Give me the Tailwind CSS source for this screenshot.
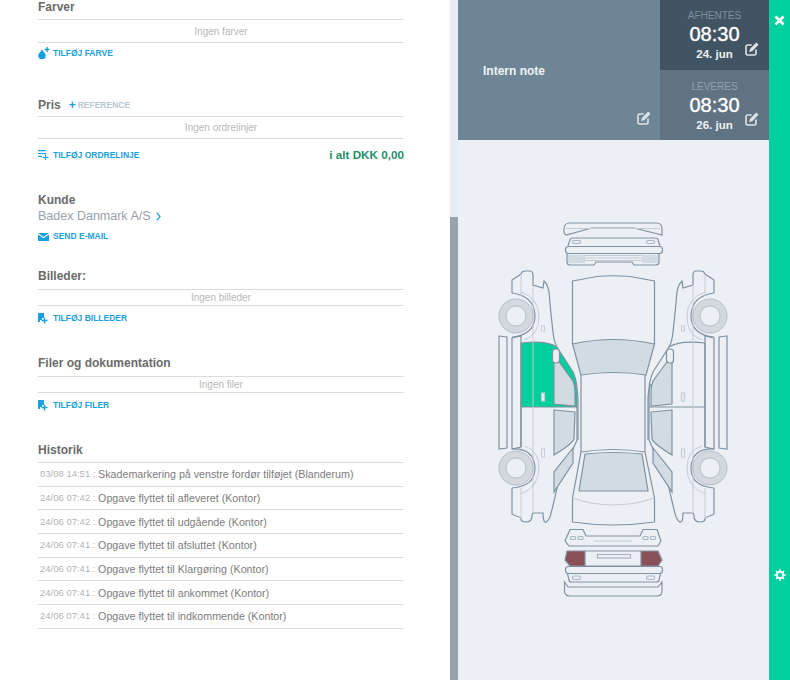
<!DOCTYPE html>
<html lang="da">
<head>
  <meta charset="UTF-8" />
  <title>Opgave</title>
  <script src="https://cdn.jsdelivr.net/npm/@tailwindcss/browser@4"></script>
</head>
<body class="bg-white font-['Liberation_Sans',Arial,sans-serif] overflow-hidden">

  <!-- Ikoner -->
  <svg class="hidden">
    <symbol id="edit" viewBox="0 0 14 14">
      <path d="M11 7.500v3.800a1.700 1.700 0 0 1-1.700 1.700H2.700A1.700 1.700 0 0 1 1 11.300V4.700A1.700 1.700 0 0 1 2.700 3h4" fill="none" stroke="currentColor" stroke-width="1.600"/>
      <path d="M4.200 10l.8-3L11.200.500l2.300 2.200L7.200 9.200z" fill="currentColor"/>
    </symbol>
    <symbol id="fileplus" viewBox="0 0 10 11">
      <path d="M0 0h6v5H4v2H2v2H0z" fill="currentColor"/>
      <path d="M3.500 7.500h6M6.500 4.800v5.800" stroke="currentColor" stroke-width="1.500"/>
    </symbol>
    <!-- Bilens side, tegnet til venstre og spejlet til hoejre -->
    <symbol id="carside" viewBox="490 215 250 395" overflow="visible">
      <g fill="none" stroke="#8091a0" stroke-width="1.200">
        <path d="M512 293V280L521 274Q522 271 525 271H531Q533 272 533 275V285L543 288L544 281Q548 285 549 292Q551 315 553 332Q554 342 557 347L573 372Q577 381 577 390V440L562 473Q558 482 555 497Q552 510 550 517Q547 523 545 522Q543 521 543 513H534Q532 513 532 516Q532 522 526 522Q521 522 521 519Q521 517 516 516L512 514V488"/>
        <path d="M512 293Q534 296 535 315Q535 335 512 337"/>
        <path d="M512 449Q534 448 535 468Q535 486 512 488"/>
        <path d="M499 336L507 337V448L499 449Z"/>
        <path d="M512 338L521 336V447L512 449Z"/>
        <path d="M521 343V447"/>
        <path d="M521 343Q546 340 557 347M521 407H577"/>
        <path d="M575 384Q578 390 578 400V440"/>
        <path d="M554 355L573 381Q575 386 575 392V406L554 404Z" fill="#d3dbe2"/>
        <path d="M554 410L575 412L574 439Q572 444 554 455Z" fill="#d3dbe2"/>
        <path d="M573 448L554 472V492L573 463Z" fill="#d3dbe2"/>
        <rect x="552.500" y="349" width="7" height="14" rx="3" fill="#ecf0f5"/>
      </g>
      <g fill="none" stroke="#c3ccd4" stroke-width="1">
        <path d="M533 285V513M521 274V296M521 488V518"/>
        <path d="M521 292Q539 298 539 317Q539 335 524 340"/>
        <path d="M524 446Q539 450 539 468Q539 487 521 494"/>
        <rect x="541.500" y="326" width="3" height="5"/>
        <rect x="541.500" y="449" width="3" height="8"/>
      </g>
      <g stroke="#b4bec7" stroke-width="1" fill="#d3d8de">
        <path fill-rule="evenodd" d="M516 299a17 17 0 1 0 .01 0zM516 306a10 10 0 1 1-.01 0z"/>
        <path fill-rule="evenodd" d="M516 451a17 17 0 1 0 .01 0zM516 458a10 10 0 1 1-.01 0z"/>
      </g>
    </symbol>
  </svg>

  <div class="flex w-[790px] h-[680px] overflow-hidden">

    <!-- Venstre kolonne -->
    <div class="w-[450px] h-full shrink-0 pl-[38px] pr-[46px] text-[#6b6b6b]">

      <h2 class="h-[19px] text-[12px] leading-[15px] font-bold">Farver</h2>
      <div class="h-[24px] border-y border-[#dcdcdc] flex items-center justify-center text-[10px] text-[#b8b8b8]">Ingen farver</div>
      <div class="h-[21px] flex items-center gap-[3px] text-[8.500px] font-bold text-[#1a9fe0]">
        <svg class="w-[12px] h-[12px] -mt-[1px]" viewBox="0 0 12 12"><path d="M4 2.500C5.500 5 7.800 6.500 7.800 8.500a3.800 3.800 0 0 1-7.600 0C.2 6.500 2.500 5 4 2.500z" fill="currentColor"/><path d="M6.500 2.500h5M9 0v5" stroke="currentColor" stroke-width="1.400"/></svg>
        <span>TILFØJ FARVE</span>
      </div>

      <div class="mt-[34px] h-[18px] flex text-[12px] leading-[15px]">
        <h2 class="font-bold">Pris</h2>
        <span class="ml-[8px] flex items-center h-[14px] text-[8.500px] font-bold text-[#b4c7d3]"><span class="text-[#1a9fe0] text-[12px] mr-[2px]">+</span>REFERENCE</span>
      </div>
      <div class="h-[23px] border-y border-[#dcdcdc] flex items-center justify-center text-[10px] text-[#b8b8b8]">Ingen ordrelinjer</div>
      <div class="h-[32px] flex items-center justify-between">
        <div class="flex items-center gap-[4px] text-[8.500px] font-bold text-[#1a9fe0]">
          <svg class="w-[11px] h-[10px]" viewBox="0 0 11 10"><path d="M0 .7h8M0 3.500h8M0 6.300h4M4.500 7.500h6M7.500 4.500v5.500" fill="none" stroke="currentColor" stroke-width="1.200"/></svg>
          <span>TILFØJ ORDRELINJE</span>
        </div>
        <span class="text-[11.700px] font-bold text-[#1f8f6b]">i alt DKK 0,00</span>
      </div>

      <h2 class="mt-[21px] h-[14px] text-[12px] leading-[16px] font-bold">Kunde</h2>
      <div class="h-[20px] flex items-center gap-[5px] text-[12.500px] text-[#98a0a8]">
        <span>Badex Danmark A/S</span>
        <svg class="w-[5px] h-[9px]" viewBox="0 0 5 9"><path d="M.7.700L4 4.500.7 8.300" fill="none" stroke="#1a9fe0" stroke-width="1.200"/></svg>
      </div>
      <div class="h-[21px] flex items-center gap-[4px] text-[8.500px] font-bold text-[#1a9fe0]">
        <svg class="w-[11px] h-[8px]" viewBox="0 0 11 8"><path d="M0 0h11L5.500 4z" fill="currentColor"/><path d="M0 1.500L5.500 5.300 11 1.500V8H0z" fill="currentColor"/></svg>
        <span>SEND E-MAIL</span>
      </div>

      <h2 class="mt-[22px] h-[20px] text-[12px] leading-[15px] font-bold">Billeder:</h2>
      <div class="h-[17px] border-y border-[#dcdcdc] flex items-center justify-center text-[10px] text-[#b8b8b8]">Ingen billeder</div>
      <div class="h-[24px] flex items-center gap-[5px] text-[8.500px] font-bold text-[#1a9fe0]">
        <svg class="w-[10px] h-[11px] text-[#1a9fe0]"><use href="#fileplus"/></svg>
        <span>TILFØJ BILLEDER</span>
      </div>

      <h2 class="mt-[26px] h-[20px] text-[12px] leading-[15px] font-bold">Filer og dokumentation</h2>
      <div class="h-[17px] border-y border-[#dcdcdc] flex items-center justify-center text-[10px] text-[#b8b8b8]">Ingen filer</div>
      <div class="h-[24px] flex items-center gap-[5px] text-[8.500px] font-bold text-[#1a9fe0]">
        <svg class="w-[10px] h-[11px] text-[#1a9fe0]"><use href="#fileplus"/></svg>
        <span>TILFØJ FILER</span>
      </div>

      <h2 class="mt-[25px] h-[20px] text-[12px] leading-[16px] font-bold">Historik</h2>
      <ul class="border-t border-[#dcdcdc] text-[10.700px] text-[#7c7c7c]">
        <li class="h-[23.700px] border-b border-[#dcdcdc] flex items-center pl-[2px] whitespace-pre"><span class="text-[9.500px] text-[#b4b4b4]">03/08 14:51 : </span>Skademarkering på venstre fordør tilføjet (Blanderum)</li>
        <li class="h-[23.700px] border-b border-[#dcdcdc] flex items-center pl-[2px] whitespace-pre"><span class="text-[9.500px] text-[#b4b4b4]">24/06 07:42 : </span>Opgave flyttet til afleveret (Kontor)</li>
        <li class="h-[23.700px] border-b border-[#dcdcdc] flex items-center pl-[2px] whitespace-pre"><span class="text-[9.500px] text-[#b4b4b4]">24/06 07:42 : </span>Opgave flyttet til udgående (Kontor)</li>
        <li class="h-[23.700px] border-b border-[#dcdcdc] flex items-center pl-[2px] whitespace-pre"><span class="text-[9.500px] text-[#b4b4b4]">24/06 07:41 : </span>Opgave flyttet til afsluttet (Kontor)</li>
        <li class="h-[23.700px] border-b border-[#dcdcdc] flex items-center pl-[2px] whitespace-pre"><span class="text-[9.500px] text-[#b4b4b4]">24/06 07:41 : </span>Opgave flyttet til Klargøring (Kontor)</li>
        <li class="h-[23.700px] border-b border-[#dcdcdc] flex items-center pl-[2px] whitespace-pre"><span class="text-[9.500px] text-[#b4b4b4]">24/06 07:41 : </span>Opgave flyttet til ankommet (Kontor)</li>
        <li class="h-[23.700px] border-b border-[#dcdcdc] flex items-center pl-[2px] whitespace-pre"><span class="text-[9.500px] text-[#b4b4b4]">24/06 07:41 : </span>Opgave flyttet til indkommende (Kontor)</li>
      </ul>
    </div>

    <!-- Scrollbar -->
    <div class="w-[8px] h-full shrink-0 bg-[#98a2ae]">
      <div class="h-[217px] bg-[#e8edf4]"></div>
    </div>

    <!-- Hoejre panel -->
    <div class="w-[311px] h-full shrink-0 bg-[#ecf0f5] flex flex-col">
      <div class="h-[140px] flex shrink-0">
        <div class="relative flex-1 bg-[#6e8595] flex items-center pl-[25px] pt-[2px] text-[12px] font-bold text-[#f0f3f5]">
          Intern note
          <svg class="absolute right-[9px] bottom-[15px] w-[14px] h-[14px] text-[#dfe4e8]"><use href="#edit"/></svg>
        </div>
        <div class="w-[109px] flex flex-col text-center text-white">
          <div class="relative h-[70px] bg-[#415463] pt-[9px]">
            <div class="text-[10px] leading-[13px] text-[#7f909e]">AFHENTES</div>
            <div class="text-[20px] leading-[24px] [-webkit-text-stroke:0.4px_white]">08:30</div>
            <div class="text-[11.500px] leading-[16px] font-bold text-[#eef1f3]">24. jun</div>
            <svg class="absolute right-[10px] bottom-[14px] w-[14px] h-[14px] text-[#dfe4e8]"><use href="#edit"/></svg>
          </div>
          <div class="relative h-[70px] bg-[#5f7382] pt-[10px]">
            <div class="text-[10px] leading-[13px] text-[#93a2ae]">LEVERES</div>
            <div class="text-[20px] leading-[24px] [-webkit-text-stroke:0.4px_white]">08:30</div>
            <div class="text-[11.500px] leading-[16px] font-bold text-[#eef1f3]">26. jun</div>
            <svg class="absolute right-[10px] bottom-[14px] w-[14px] h-[14px] text-[#dfe4e8]"><use href="#edit"/></svg>
          </div>
        </div>
      </div>

      <!-- Skadediagram -->
      <div class="pt-[75px] pl-[32px]">
        <svg class="block w-[250px] h-[395px]" viewBox="490 215 250 395" fill="none" stroke="#8091a0" stroke-width="1.200">
          <!-- Skadet doer og baglygter -->
          <path d="M521 343Q546 340 557 347L573 372Q577 381 577 390V407H521Z" fill="#00cf9e" stroke="none"/>
          <path d="M567 551H585V566H570L565 560Z" fill="#8a5057"/>
          <path d="M641 551H658L662 560L658 566H641Z" fill="#8a5057"/>

          <use href="#carside" x="490" y="215" width="250" height="395"/>
          <g transform="matrix(-1 0 0 1 1226 0)"><use href="#carside" x="490" y="215" width="250" height="395"/></g>
          <rect x="541.500" y="393" width="3" height="8" fill="#ecf0f5" stroke="#c3ccd4"/>
          <rect x="681.500" y="393" width="3" height="8" stroke="#c3ccd4"/>

          <!-- Forfra -->
          <path d="M564 229Q564 223 570 223H657Q662 223 662 229V235L634 228H592L566 235Q564 234 564 232Z"/>
          <path d="M566 228.500H660" stroke="#c3ccd4"/>
          <path d="M568 246L570 240Q570 238 573 238H655Q658 238 658 240L660 246"/>
          <rect x="565.500" y="246.500" width="97" height="7" rx="3"/>
          <path d="M567 253.500V262Q567 265 570 265H594L596 262H632L634 265H656Q659 265 659 262V253.500"/>
          <path d="M568 255H585V263H568ZM642 255H658V263H642Z" fill="#d3dbe2" stroke="none"/>
          <path d="M585 255.500H642M585 258H642M585 260.500H642" stroke="#c3ccd4"/>
          <rect x="572.500" y="240.500" width="8" height="3" rx="1.500" stroke="#a9b5bf"/>
          <rect x="646.500" y="240.500" width="8" height="3" rx="1.500" stroke="#a9b5bf"/>

          <!-- Midterdel -->
          <path d="M572.500 281L597 276.500Q613 275 630 276.500L654.500 281V344H572.500Z"/>
          <path d="M572.500 344Q613 335 654.500 344L646 375Q613 370 581 375Z" fill="#d3dbe2"/>
          <path d="M581 375V452M645 375V452"/>
          <path d="M581 452Q613 447 645 452"/>
          <path d="M585 454Q613 451 642 454L648 491H579Z" fill="#d3dbe2"/>
          <path d="M581 452L572.500 498V522Q613 528 654.500 522V498L645 452"/>
          <path d="M572.500 498Q613 512 654.500 498" stroke="#c3ccd4"/>

          <!-- Bagfra -->
          <path d="M570 529.500H583L586 536H640L643 529.500H657L661 541L658 546H569L565 541Z"/>
          <path d="M594 541H632" stroke="#c3ccd4"/>
          <rect x="570.500" y="536.500" width="5" height="3" rx="1" stroke="#a9b5bf"/>
          <rect x="578" y="536.500" width="5" height="3" rx="1" stroke="#a9b5bf"/>
          <rect x="643" y="536.500" width="5" height="3" rx="1" stroke="#a9b5bf"/>
          <rect x="650.500" y="536.500" width="5" height="3" rx="1" stroke="#a9b5bf"/>
          <path d="M585 551H641M585 566H641"/>
          <rect x="597.500" y="554.500" width="33" height="3.500" stroke="#a9b5bf"/>
          <rect x="565.500" y="566.500" width="97" height="7" rx="3"/>
          <path d="M567.500 573.500L569 580Q569 582 572 582H656Q659 582 659 580L660.500 573.500"/>
          <rect x="572.500" y="576" width="8" height="3.500" rx="1.500" stroke="#a9b5bf"/>
          <rect x="646.500" y="576" width="8" height="3.500" rx="1.500" stroke="#a9b5bf"/>
          <path d="M564.500 582L568 587H658L662 582V591Q662 596 657 596H570Q564.500 596 564.500 591Z"/>
        </svg>
      </div>
    </div>

    <!-- Groen sidebar -->
    <div class="flex-1 h-full bg-[#00cf9e] flex flex-col items-center justify-between pt-[15px] pb-[99px]">
      <svg class="w-[11px] h-[11px]" viewBox="0 0 11 11"><path d="M1.500 1.500l8 8M9.500 1.500l-8 8" stroke="white" stroke-width="2.600"/></svg>
      <svg class="w-[12px] h-[12px]" viewBox="0 0 12 12"><circle cx="6" cy="6" r="3.200" fill="none" stroke="white" stroke-width="2"/><path d="M6 .3v2M6 9.700v2M.3 6h2M9.700 6h2M2 2l1.400 1.400M8.600 8.600L10 10M10 2L8.600 3.400M3.400 8.600L2 10" stroke="white" stroke-width="1.600"/></svg>
    </div>
  </div>

</body>
</html>
